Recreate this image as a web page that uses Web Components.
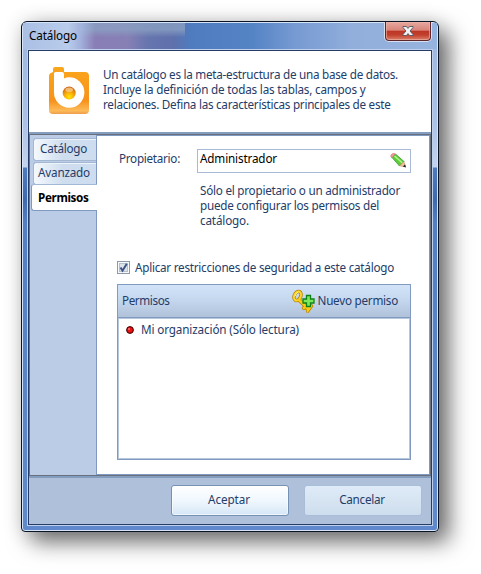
<!DOCTYPE html>
<html lang="es"><head><meta charset="utf-8"><title>Catálogo</title>
<style>html,body{margin:0;width:481px;height:574px;overflow:hidden;background:#fff}body{font:11.7px/15px "Noto Sans","Open Sans",sans-serif;color:#243c68}</style>
</head><body>
<catalog-window></catalog-window>
<script>
const define=(name,html,ready)=>customElements.define(name,class extends HTMLElement{
  constructor(){super();this.attachShadow({mode:'open'}).innerHTML=html;}
  connectedCallback(){ready&&ready.call(this,this.shadowRoot);}
});

/* One line of text whose tracking is set so that it spans the width in "w". */
define('text-line',`<style>:host{display:block;white-space:nowrap;height:15px;line-height:15px}span{display:inline-block}</style><span><slot></slot></span>`,function(root){
  const s=root.querySelector('span'),w=+this.getAttribute('w');
  const fit=()=>{
    s.style.letterSpacing='0';
    const n=root.querySelector('slot').assignedNodes({flatten:true}).map(t=>t.textContent).join('').trim().length;
    if(w&&n>1)s.style.letterSpacing=(w-s.getBoundingClientRect().width)/n+'px';
  };
  root.querySelector('slot').addEventListener('slotchange',fit);
  fit();
});

define('app-logo',`<style>:host,svg{display:block;width:40px;height:48px}</style>
<svg viewBox="0 0 40 48"><defs>
<linearGradient id="a" x2="0" y2="1"><stop offset="0" stop-color="#faa61c"/><stop offset=".72" stop-color="#f7921c"/><stop offset=".93" stop-color="#fdbb58"/><stop offset="1" stop-color="#ee9c4c"/></linearGradient>
<radialGradient id="b" cx=".5" cy=".8" r=".75"><stop offset="0" stop-color="#ffe800"/><stop offset=".4" stop-color="#fdb50a"/><stop offset="1" stop-color="#ce6412"/></radialGradient></defs>
<path fill="url(#a)" d="M4 2q0-2 2-2h7q2 0 2 2v3h21q4 0 4 4v34q0 4-4 4H4q-4 0-4-4V9q0-3 4-4z"/>
<path fill="#fff" d="M5 6.500q0-1.500 1.500-1.500H13q2 0 2 2v4.500q2.500-1.200 5-1.200a15.200 15.200 0 1 1-15 15.200z"/>
<circle cx="20.200" cy="26" r="6.500" fill="url(#b)"/><ellipse cx="20.200" cy="22.700" rx="3.800" ry="2.200" fill="#ffe3b0" opacity=".6"/></svg>`);

define('close-button',`<style>:host{display:block;box-sizing:border-box;width:48px;height:20px;margin-top:-1px;padding:0 1px 1px;background:#d8e0ee;border-radius:0 0 5px 5px}
div{box-sizing:border-box;height:19px;border:1px solid #5b2630;border-top:0;border-radius:0 0 4px 4px;display:flex;align-items:center;justify-content:center;background:linear-gradient(#e5a79f,#d98579 46%,#bd3524 50%,#c1402c 72%,#dd806a);box-shadow:inset 0 0 0 1px #efb8ac99}
svg{display:block}</style><div><svg width="12" height="10" viewBox="0 0 12 10"><path d="M1 .5h3.400L6 2.400 7.600.5H11v1L8 5l3 3.500v1H7.600L6 7.600 4.400 9.500H1v-1L4 5 1 1.500z" fill="#f4f4f4" stroke="#5b5c6a"/></svg></div>`);

define('title-bar',`<style>:host{display:flex;justify-content:space-between;height:26px;padding:0 5px 0 6px;color:#000;
background:linear-gradient(90deg,#a9bfe4 0,#b9cceb 45px,#a8bde4cc 58px,transparent 72px),linear-gradient(#8aa0c2cc 25%,#8497c400 55%) 57px 0/105px 100% no-repeat,linear-gradient(90deg,#8a7db6 57px,#8680b5 105px,#6675ae 125px,#5f70ac 150px,#4e7cbe 168px,#5584c5 230px,#7599d2 270px,#92afdc 330px,#96b2de)}
text-line{margin-top:5px}</style><text-line w="48">Catálogo</text-line><close-button></close-button>`);

define('intro-banner',`<style>:host{display:flex;height:81px;background:#fff}app-logo{margin:16px 0 0 20px}div{margin:16px 0 0 14px}</style>
<app-logo></app-logo><div><text-line w="295">Un catálogo es la meta-estructura de una base de datos.</text-line><text-line w="262.500">Incluye la definición de todas las tablas, campos y</text-line><text-line w="287.500">relaciones. Defina las características principales de este</text-line></div>`);

define('side-tab',`<style>:host{display:block;box-sizing:border-box;width:64px;height:23px;margin:0 0 1px 3px;padding:2px 0 0 6px;border:1px solid #a4b7d3;border-right:0;border-radius:3px 0 0 3px;background:linear-gradient(90deg,#f5f9fd,#cfdeef 45%,#cddcee);box-shadow:inset 0 1px #edf3fa}
:host([wide]){padding-left:4px}
:host([active]){width:66px;height:27px;margin:-2px 0 0 1px;padding:5px 0 0 6px;color:#000;font-weight:bold;background:#fff;border-color:#8099c0;border-top-color:#a4b7d3;box-shadow:none;position:relative}</style><slot></slot>`);

define('edit-field',`<style>:host{display:flex;box-sizing:border-box;width:214px;height:24px;border:1px solid #a9bad6;background:#fff;color:#000;justify-content:space-between;padding:2px 3px 0 2px}text-line{margin-top:-1px}</style>
<text-line w="77"><slot></slot></text-line><svg width="18" height="18" viewBox="0 0 18 18"><path d="M3 5.500l3.500-3.500 8.500 7.500-4.500 4.500z" fill="#5dcc3c" stroke="#3c9a2c" stroke-width=".8"/><path d="M5.500 4l8 7" stroke="#b5f28e" stroke-width="1.600"/><path d="M2 5q-.6-2 1-3t3-.2L3 5.600z" fill="#f3a19c" stroke="#d4605c" stroke-width=".6"/><path d="M10.500 13.800l4.300-4.300 1.700 5.300z" fill="#f0c290" stroke="#a9784e" stroke-width=".5"/><path d="M13.800 14.400l2.300-1.900.9 2.900z" fill="#222"/></svg>`);

define('check-option',`<style>:host{display:flex;align-items:flex-start;gap:5px;height:15px}svg{display:block}text-line{margin-top:-1px}</style><svg width="13" height="13"><rect x=".5" y=".5" width="12" height="12" fill="#f8f9fa" stroke="#8e9aab"/><rect x="2.500" y="2.500" width="8" height="8" fill="#dde3ea" stroke="#b8c0ca"/><path d="M3.500 6.500l2 3.200L9.800 2.800" fill="none" stroke="#3c5484" stroke-width="2"/></svg><text-line w="259"><slot></slot></text-line>`);

define('permission-list',`<style>:host{display:block;box-sizing:border-box;width:294px;height:176px;border:1px solid #819bc0;background:#fff;box-shadow:inset 0 0 0 1px #b6c6dd}
header{box-sizing:border-box;height:33px;display:flex;align-items:center;padding:0 12px 0 4px;background:linear-gradient(#d2e3f8,#c5d8ef 45%,#b0c2da);border-bottom:1px solid #819bc0;box-shadow:0 1px #b6c6dd}header text-line{margin-top:-2px}
.key{margin-left:auto;margin-right:3px}.row{display:flex;align-items:center;gap:7px;padding:4px 0 0 8px}.row text-line{margin-bottom:1px}svg{display:block}</style>
<header><text-line w="47.500">Permisos</text-line><svg class="key" width="24" height="24" viewBox="0 0 24 24"><g fill="none" stroke-linecap="round"><ellipse cx="6.500" cy="7" rx="3.200" ry="4.700" transform="rotate(25 6.500 7)" stroke="#b98500" stroke-width="3.600"/><path d="M8 11l9 8M13 19l3-2 1 4 3-4" stroke="#b98500" stroke-width="4.200"/><ellipse cx="6.500" cy="7" rx="3.200" ry="4.700" transform="rotate(25 6.500 7)" stroke="#ffd82f" stroke-width="2"/><path d="M8 11l9 8M13 19l3-2 1 4 3-4" stroke="#fccb18" stroke-width="2.700"/><path d="M4 7q1-3 3-4" stroke="#fff6a0"/></g><path d="M15.500 6.500h4v3.500H23v4h-3.500v3.500h-4V14H12v-4h3.500z" fill="#7bea59" stroke="#128018" stroke-width="1.300"/></svg><text-line w="80.500">Nuevo permiso</text-line></header>
<div class="row"><svg width="8" height="8"><circle cx="4" cy="4" r="3.400" fill="#ed1010" stroke="#300"/><circle cx="3" cy="3" r="1" fill="#ff7777"/></svg><text-line w="158"><slot></slot></text-line></div>`);

define('push-button',`<style>:host{display:flex;box-sizing:border-box;width:118px;height:31px;justify-content:center;padding:6px 2px 0 0;border:1px solid #aabdd6;border-radius:3px;background:linear-gradient(#dfebf8,#cedded)}
:host([primary]){border-color:#7592b5;background:linear-gradient(#fff,#f0f7fd 50%,#d6e7f7);box-shadow:inset 0 0 0 1px #fff9}</style><slot></slot>`);

define('settings-body',`<style>:host{display:flex;box-sizing:border-box;height:342px;border:1px solid #68707e;background:#bbcde6}
nav{box-sizing:border-box;width:66px;padding-top:3px}
main{box-sizing:border-box;width:334px;border:1px solid #8099c0;background:#fff;padding:13px 0 0 20px}
.row{display:flex;padding-left:2px}.row>text-line{margin-top:2px;width:78px}.hint{margin:10px 0 0 83px}check-option{margin:33px 0 8px}</style>
<nav><side-tab><text-line w="47">Catálogo</text-line></side-tab><side-tab wide><text-line w="52">Avanzado</text-line></side-tab><side-tab active><text-line w="50.500">Permisos</text-line></side-tab></nav>
<main><div class="row"><text-line w="61">Propietario:</text-line><edit-field>Administrador</edit-field></div>
<div class="hint"><text-line w="200">Sólo el propietario o un administrador</text-line><text-line w="179">puede configurar los permisos del</text-line><text-line w="49">catálogo.</text-line></div>
<check-option>Aplicar restricciones de seguridad a este catálogo</check-option><permission-list>Mi organización (Sólo lectura)</permission-list></main>`);

define('catalog-window',`<style>:host{display:block;box-sizing:border-box;width:418px;height:511px;margin:21px 0 0 21px;border:1px solid #0b1424;border-radius:6px 6px 4px 4px;
background:linear-gradient(#9db6df 0,#abc1e6 100px,#c3d4ee 145px,#4d7bc0 146px,#3e6ab0 178px,#527fc4 200px,#5f89cc);box-shadow:inset 0 0 0 1px #d5e4f7,10px 10px 22px rgba(0,0,0,.56),0 0 20px rgba(0,0,0,.13)}
.frame{padding:1px 1px 0}.client{box-sizing:border-box;width:406px;height:477px;margin:0 5px;border:1px solid #bed0ec}.inner{border:1px solid #263c66;height:473px}
hr{margin:0;border:0;height:2px;background:#849dbe}footer{display:flex;box-sizing:border-box;height:46px;background:#aec0da;padding:7px 9px;justify-content:flex-end;gap:15px}</style>
<div class="frame"><title-bar></title-bar></div><div class="client"><div class="inner"><intro-banner></intro-banner><hr><settings-body></settings-body><hr><footer><push-button primary><text-line w="42">Aceptar</text-line></push-button><push-button><text-line w="45.500">Cancelar</text-line></push-button></footer></div></div>`);
</script></body></html>
